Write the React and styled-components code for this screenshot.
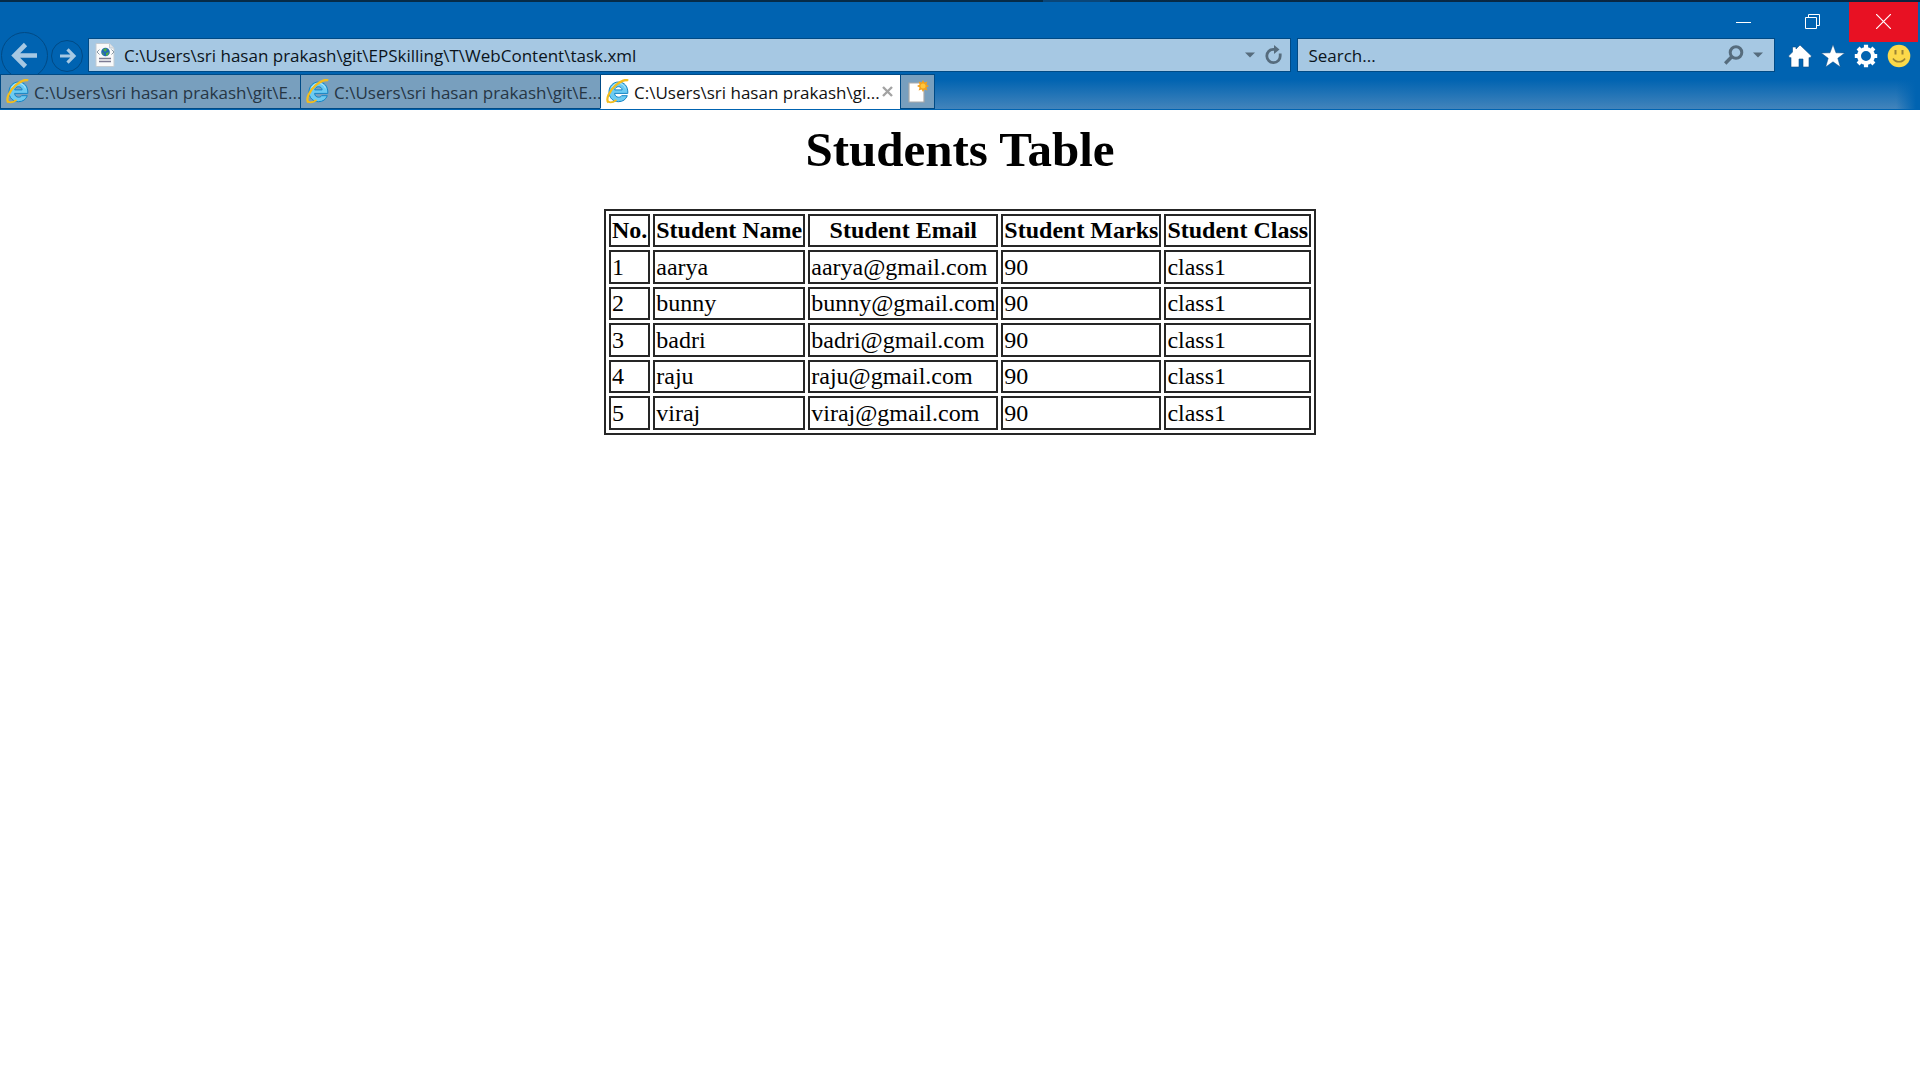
import React from "react";
import styled, { createGlobalStyle } from "styled-components";

const ui = `"Open Sans", "Noto Sans", sans-serif`;
const edge = "#004a85";

const GlobalStyle = createGlobalStyle`
  *, *::before, *::after { box-sizing: border-box; }
  body { margin: 0; background: #fff; color: #000; }
  button, input { font: inherit; color: inherit; }
`;

const Chrome = styled.header`
  display: flex;
  flex-direction: column;
  background: #0063b1;
  font: 17px/24px ${ui};
`;

const TopEdge = styled.div`
  height: 2px;
  background: linear-gradient(90deg, #062b47 54.3%, #0a4678 54.3%, #0a4678 57.8%, #062b47 57.8%, #0b2440);
`;

const TitleBar = styled.div`
  display: flex;
  justify-content: flex-end;
  height: 30px;
  padding-right: 2px;
`;

const PlainButton = styled.button`
  display: flex;
  align-items: center;
  justify-content: center;
  flex: none;
  padding: 0;
  border: 0;
  background: none;
  svg { display: block; flex: none; }
`;

const CaptionButton = styled(PlainButton)`
  width: 69px;
  height: 40px;
  margin-left: ${(p) => (p.$danger ? 2 : 0)}px;
  padding-bottom: 2px;
  background: ${(p) => (p.$danger ? "#e81123" : "transparent")};
`;

const Toolbar = styled.div`
  display: flex;
  align-items: flex-start;
  height: 42px;
  padding: 0 9px 0 1px;
  overflow: hidden;
`;

const NavButton = styled(PlainButton)`
  width: ${(p) => p.$size}px;
  height: 47px;
`;

const Field = styled.label`
  display: flex;
  align-items: center;
  flex: ${(p) => p.$grow} 1 0;
  min-width: 0;
  height: 34px;
  margin: 6px 0 0 2px;
  padding: 0 ${(p) => p.$end}px 0 6px;
  border: 1px solid ${edge};
  background: #a6c8e3;

  & + & { margin-left: 6px; }
`;

const FieldInput = styled.input`
  flex: 1;
  min-width: 0;
  padding: 2px 0 0 ${(p) => p.$indent}px;
  border: 0;
  outline: 0;
  background: none;
  color: #0b141c;
  &::placeholder { color: #0b141c; opacity: 1; }
`;

const Tools = styled.nav`
  display: flex;
  gap: 9px;
  margin: 12px 0 0 13px;
`;

const TabStrip = styled.div`
  display: flex;
  height: 36px;
  border-bottom: 1px solid #0063b1;
  background: linear-gradient(90deg, transparent calc(100% - 24px), #0063b1 calc(100% - 4px)),
    linear-gradient(#0063b1 15%, #4384bb);
`;

const Tab = styled.div`
  display: flex;
  align-items: center;
  width: 300px;
  padding: 0 7px 0 5px;
  border: 1px solid ${edge};
  border-right-width: 0;
  border-bottom-color: ${(p) => (p.$active ? "#fff" : edge)};
  background: ${(p) => (p.$active ? "#fff" : "#789fbe")};
  color: ${(p) => (p.$active ? "#111" : "#263645")};
  svg { display: block; flex: none; }
`;

const TabTitle = styled.button`
  flex: none;
  padding: 2px 0 0 4px;
  border: 0;
  background: none;
  white-space: nowrap;
`;

const CloseTab = styled(PlainButton)`
  margin-left: auto;
`;

const NewTab = styled(PlainButton)`
  width: 35px;
  border: 1px solid ${edge};
  background: #789fbe;
`;

const Page = styled.main`
  padding: 12px;
  font: 24px/28px "Liberation Serif", "Times New Roman", serif;
`;

const Heading = styled.h1`
  margin: 0 0 32px;
  font-size: 49px;
  line-height: 55px;
  text-align: center;
`;

const Table = styled.table`
  margin: 0 auto;
  border: 2px solid #262626;
  border-spacing: 3px;

  thead tr, tbody tr:nth-child(even) { line-height: 27px; }
`;

const HeadCell = styled.th`
  padding: 1px;
  border: 2px solid #262626;
  white-space: nowrap;
`;

const Cell = styled.td`
  padding: 1px;
  border: 2px solid #262626;
`;

const Arrow = ({ size, radius, flip, small }) => (
  <svg width={size} height={size} viewBox={`0 0 ${size} ${size}`}>
    <circle cx={size / 2} cy={size / 2} r={radius} fill="none" stroke={edge} />
    <g transform={flip ? `translate(${size} 0) scale(-1 1)` : undefined} fill="none" stroke="#a6c8e3">
      {small ? (
        <path d="M8 16H23M15.500 9.300L9 16l6.500 6.700" strokeWidth="3.200" />
      ) : (
        <path d="M13 23.500H36M24.500 12.500L13.500 23.500l11 11" strokeWidth="4.600" />
      )}
    </g>
  </svg>
);

const XmlPageIcon = () => (
  <svg width="20" height="24" viewBox="0 0 20 24">
    <path d="M1 .5h13.500L19 5v18.500H1z" fill="#fafafa" stroke="#c2cbd2" />
    <path d="M14.500 .5V5H19" fill="#e2e6e9" stroke="#c2cbd2" />
    <circle cx="10.500" cy="9" r="4.300" fill="#2467b4" />
    <path d="M8 6.500l3-1.500 1 2-2 2zM11 10l3-1-1 3-2 1zM7 9l2 2-1 1z" fill="#4fae45" />
    <path d="M4.500 6.500L2 9l2.500 2.500M16.500 6.500L19 9l-2.500 2.500" fill="none" stroke="#8b9aa6" />
    <path d="M4 15.500h12M4 18.500h12" stroke="#7d7b93" strokeWidth="1.300" />
  </svg>
);

const BrowserIcon = () => (
  <svg width="24" height="25" viewBox="0 0 24 25">
    <path d="M12.500 3C7 3 3 7.300 3 13s4 9.700 9.500 9.700c4.300 0 7.400-2.200 8.800-6h-5.700c-.6 1-1.700 1.500-3 1.500-2.300 0-3.800-1.400-4-3.800h13.200C22.200 7.600 18.600 3 12.500 3zm-3.800 7.900c.4-2 1.800-3.200 3.800-3.200s3.400 1.200 3.600 3.200z" fill="#6ccbf2" stroke="#1684c4" strokeWidth="1" />
    <path d="M5.500 9c1.500-3 4-4.700 7-4.700 3.500 0 6 2 7 5" fill="none" stroke="#b9e8fb" strokeWidth="1" />
    <path d="M2.500 23.500C-.5 20.500 3 12 10 6c5-4.300 10.300-6 12-4.300" fill="none" stroke="#f4bd1c" strokeWidth="2.300" />
    <path d="M2.500 22.800c1.500 1 5 .3 8-1.800" fill="none" stroke="#f4bd1c" strokeWidth="1.800" />
  </svg>
);

const Caret = () => (
  <svg width="10" height="6" viewBox="0 0 10 6"><path d="M0 .5h10L5 5.500z" fill="#566c7d" /></svg>
);

const FieldButton = styled(PlainButton)`
  margin-left: ${(p) => p.$gap}px;
`;

const students = [
  ["aarya", "aarya@gmail.com"],
  ["bunny", "bunny@gmail.com"],
  ["badri", "badri@gmail.com"],
  ["raju", "raju@gmail.com"],
  ["viraj", "viraj@gmail.com"],
];

const tabs = [
  { title: "C:\\Users\\sri hasan prakash\\git\\E..." },
  { title: "C:\\Users\\sri hasan prakash\\git\\E..." },
  { title: "C:\\Users\\sri hasan prakash\\gi...", active: true },
];

export default function App() {
  return (
    <>
      <GlobalStyle />
      <Chrome>
        <TopEdge />
        <TitleBar>
          <CaptionButton aria-label="Minimize">
            <svg width="15" height="15"><path d="M0 8.500h15" stroke="#fff" /></svg>
          </CaptionButton>
          <CaptionButton aria-label="Restore">
            <svg width="15" height="15" fill="none" stroke="#fff">
              <path d="M.5 3.500h11v11H.5zM3.500 3.500v-3h11v11h-3" />
            </svg>
          </CaptionButton>
          <CaptionButton $danger aria-label="Close">
            <svg width="15" height="15"><path d="M0 0l15 15M15 0L0 15" stroke="#fff" strokeWidth="1.200" /></svg>
          </CaptionButton>
        </TitleBar>
        <Toolbar>
          <NavButton $size={47} aria-label="Back"><Arrow size={47} radius={23} /></NavButton>
          <NavButton $size={38} aria-label="Forward"><Arrow size={32} radius={15.5} flip small /></NavButton>
          <Field $grow={1187} $end={7}>
            <XmlPageIcon />
            <FieldInput $indent={9} aria-label="Address" defaultValue="C:\Users\sri hasan prakash\git\EPSkilling\T\WebContent\task.xml" />
            <FieldButton $gap={8} aria-label="Show address list"><Caret /></FieldButton>
            <FieldButton $gap={10} aria-label="Refresh">
              <svg width="18" height="20" viewBox="0 0 18 20">
                <path d="M10 4.300H8.500a6.700 6.700 0 1 0 6.700 6.500V8.500" fill="none" stroke="#566c7d" strokeWidth="2.800" />
                <path d="M9 0l5.500 4.500L9 9z" fill="#566c7d" />
              </svg>
            </FieldButton>
          </Field>
          <Field $grow={458} $end={11}>
            <FieldInput $indent={4} aria-label="Search" placeholder="Search..." />
            <FieldButton $gap={8} aria-label="Search">
              <svg width="20" height="20" viewBox="0 0 20 20" fill="none" stroke="#566c7d">
                <circle cx="12" cy="7.500" r="5.800" strokeWidth="3" />
                <path d="M8 11.500L1.200 18.500" strokeWidth="3.400" />
              </svg>
            </FieldButton>
            <FieldButton $gap={9} aria-label="Search options"><Caret /></FieldButton>
          </Field>
          <Tools>
            <PlainButton aria-label="Home">
              <svg width="24" height="24" viewBox="0 0 24 24"><path d="M12 1l11.500 11-1.500 2-1-.5V23h-6v-8h-4v8H3v-9.500l-1 .5-1.500-2L4.500 8V3h3.500v2z" fill="#fff" stroke="#0b4f86" strokeWidth=".6" /></svg>
            </PlainButton>
            <PlainButton aria-label="Favorites">
              <svg width="24" height="24" viewBox="0 0 24 24"><path d="M12 .5l3 8.300 8.700.2-6.900 5.300L19.300 23 12 17.800 4.700 23l2.500-8.700L.3 9 9 8.800z" fill="#fff" stroke="#0b4f86" strokeWidth=".5" /></svg>
            </PlainButton>
            <PlainButton aria-label="Tools">
              <svg width="24" height="24" viewBox="0 0 24 24">
                <circle cx="12" cy="12" r="7" fill="none" stroke="#fff" strokeWidth="4" />
                <path d="M12 .8V4M12 20v3.200M.8 12H4M20 12h3.200M4.100 4.100l2.300 2.300M17.600 17.600l2.300 2.300M4.100 19.900l2.300-2.300M17.600 6.400l2.300-2.300" stroke="#fff" strokeWidth="4.200" />
              </svg>
            </PlainButton>
            <PlainButton aria-label="Send a smile">
              <svg width="24" height="24" viewBox="0 0 24 24">
                <circle cx="12" cy="12" r="11.300" fill="#fcd94a" />
                <path d="M8.500 6v4.500M15.500 6v4.500" stroke="#9b8434" strokeWidth="2" />
                <path d="M6 14.500c2.500 4.300 9.500 4.300 12 0" fill="none" stroke="#9b8434" strokeWidth="1.600" />
              </svg>
            </PlainButton>
          </Tools>
        </Toolbar>
        <TabStrip>
          {tabs.map((tab, i) => (
            <Tab key={i} $active={tab.active}>
              <BrowserIcon />
              <TabTitle>{tab.title}</TabTitle>
              {tab.active && (
                <CloseTab aria-label="Close tab">
                  <svg width="11" height="11"><path d="M1 1l9 9M10 1l-9 9" stroke="#a3a3a3" strokeWidth="2.400" /></svg>
                </CloseTab>
              )}
            </Tab>
          ))}
          <NewTab aria-label="New tab">
            <svg width="22" height="24" viewBox="0 0 22 24">
              <path d="M2 3h15v19H2z" fill="#fff" stroke="#a9a9a9" strokeWidth="1.200" />
              <path d="M16 0l1.400 2.600 3-1-1 3L22 6l-2.600 1.400 1 3-3-1L16 12l-1.400-2.600-3 1 1-3L10 6l2.600-1.400-1-3 3 1z" fill="#f2a01d" />
              <circle cx="16" cy="6" r="2.500" fill="#ffc63d" />
            </svg>
          </NewTab>
        </TabStrip>
      </Chrome>
      <Page>
        <Heading>Students Table</Heading>
        <Table>
          <thead>
            <tr>
              <HeadCell>No.</HeadCell>
              <HeadCell>Student Name</HeadCell>
              <HeadCell>Student Email</HeadCell>
              <HeadCell>Student Marks</HeadCell>
              <HeadCell>Student Class</HeadCell>
            </tr>
          </thead>
          <tbody>
            {students.map(([name, email], i) => (
              <tr key={name}>
                <Cell>{i + 1}</Cell>
                <Cell>{name}</Cell>
                <Cell>{email}</Cell>
                <Cell>90</Cell>
                <Cell>class1</Cell>
              </tr>
            ))}
          </tbody>
        </Table>
      </Page>
    </>
  );
}
